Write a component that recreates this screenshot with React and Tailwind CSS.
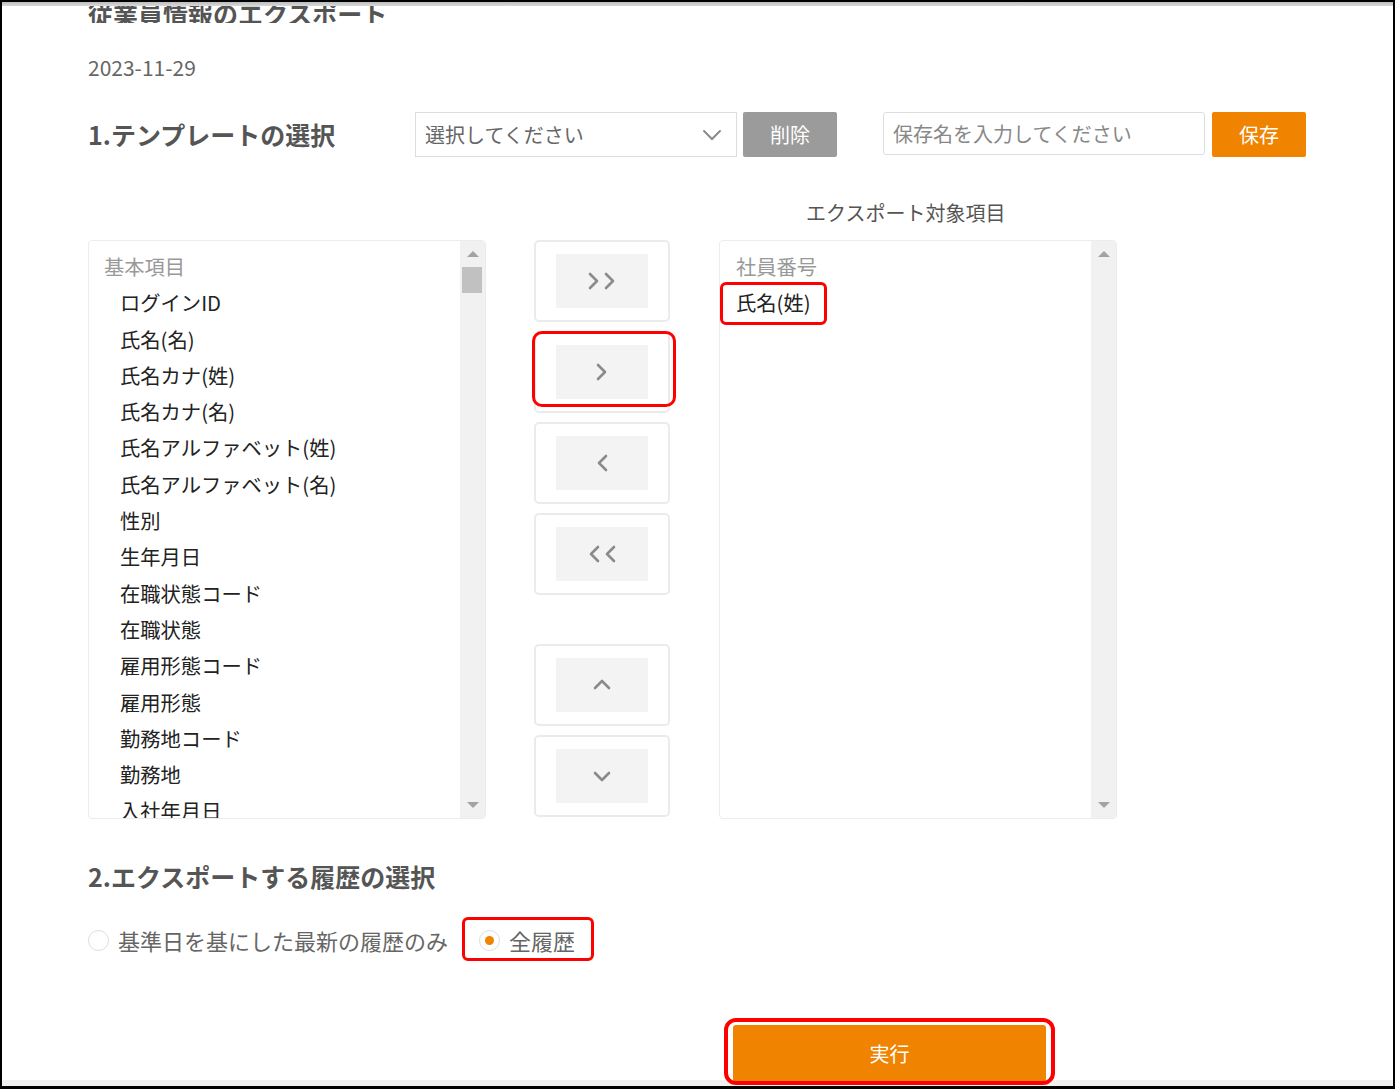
import { useState } from "react";

const font = { fontFamily: '"Noto Sans CJK JP", "Noto Sans", sans-serif' };

const baseItems = [
  "ログインID",
  "氏名(名)",
  "氏名カナ(姓)",
  "氏名カナ(名)",
  "氏名アルファベット(姓)",
  "氏名アルファベット(名)",
  "性別",
  "生年月日",
  "在職状態コード",
  "在職状態",
  "雇用形態コード",
  "雇用形態",
  "勤務地コード",
  "勤務地",
  "入社年月日",
];

const Chevron = ({ dir }) => {
  const paths = {
    right: "M7 4 L14 11 L7 18",
    left: "M15 4 L8 11 L15 18",
    up: "M4 14 L11 7 L18 14",
    down: "M4 8 L11 15 L18 8",
  };
  return (
    <svg width="22" height="22" viewBox="0 0 22 22" fill="none">
      <path d={paths[dir]} stroke="#8a8a8a" strokeWidth="2.6" strokeLinecap="round" strokeLinejoin="round" />
    </svg>
  );
};

const Double = ({ dir }) => (
  <div className="flex items-center -space-x-[6px]">
    <Chevron dir={dir} />
    <Chevron dir={dir} />
  </div>
);

const MoveButton = ({ children, highlight }) => (
  <div className="relative">
    <button
      type="button"
      className="w-[136px] h-[82px] bg-white border-2 border-[#ebebeb] rounded-[5px] flex items-center justify-center"
    >
      <div className="w-[92px] h-[54px] bg-[#f3f3f3] flex items-center justify-center">{children}</div>
    </button>
    {highlight && (
      <div className="absolute left-[-2px] top-0 w-[144px] h-[76px] border-[3px] border-[#ff0000] rounded-[10px] pointer-events-none" />
    )}
  </div>
);

const Scrollbar = ({ thumb }) => (
  <div className="w-[25px] h-full bg-[#f1f1f1] flex flex-col items-center justify-between py-[10px] relative">
    <div className="w-0 h-0 border-l-[6px] border-r-[6px] border-b-[6px] border-l-transparent border-r-transparent border-b-[#a3a3a3]" />
    {thumb && <div className="absolute left-[2px] top-[26px] w-[20px] h-[26px] bg-[#c1c1c1]" />}
    <div className="w-0 h-0 border-l-[6px] border-r-[6px] border-t-[6px] border-l-transparent border-r-transparent border-t-[#a3a3a3]" />
  </div>
);

export default function App() {
  const [history, setHistory] = useState("all");

  return (
    <div
      style={font}
      className="w-[1395px] h-[1089px] bg-white border-l-2 border-r-2 border-t-2 border-b-[3px] border-black flex flex-col overflow-hidden"
    >
      <div className="h-[4px] bg-gradient-to-b from-[#bdbdbd] to-[#d9d9d9] shrink-0" />

      <div className="flex-1 min-h-0 pl-[86px] text-[#333]">
        {/* Title (scrolled, cut at top) */}
        <div className="h-[17px] overflow-hidden flex items-end">
          <h1 className="text-[25px] leading-[25px] font-bold text-[#555] -mb-[3px] whitespace-nowrap">従業員情報のエクスポート</h1>
        </div>

        <div className="mt-[30px] text-[21px] leading-[28px] text-[#666]">2023-11-29</div>

        {/* 1. Template */}
        <div className="mt-[31px] flex items-start h-[45px]">
          <h2 className="w-[327px] text-[25px] leading-[44px] font-bold text-[#555]">1.テンプレートの選択</h2>
          <div className="w-[322px] h-[45px] border border-[#ddd] flex items-center justify-between pl-[9px] pr-[14px]">
            <span className="text-[20px] text-[#666]">選択してください</span>
            <svg width="20" height="12" viewBox="0 0 20 12" fill="none">
              <path d="M2 2 L10 10 L18 2" stroke="#8a8a8a" strokeWidth="2" strokeLinecap="round" />
            </svg>
          </div>
          <button type="button" className="ml-[6px] w-[94px] h-[45px] bg-[#9b9b9b] rounded-[2px] text-white text-[20px]">
            削除
          </button>
          <div className="ml-[46px] w-[322px] h-[43px] border border-[#ddd] rounded-[3px] flex items-center pl-[9px]">
            <span className="text-[20px] text-[#888]">保存名を入力してください</span>
          </div>
          <button type="button" className="ml-[7px] w-[94px] h-[45px] bg-[#f08300] rounded-[2px] text-white text-[20px]">
            保存
          </button>
        </div>

        <div className="mt-[42px] ml-[718px] text-[20px] leading-[28px] text-[#555]">エクスポート対象項目</div>

        {/* Lists */}
        <div className="mt-[13px] flex items-start">
          <div className="w-[398px] h-[579px] border border-[#ececec] rounded-[4px] flex overflow-hidden">
            <div className="flex-1 overflow-hidden pt-[7px] pl-[15px] text-[20.3px] leading-[36.3px]">
              <div className="text-[#999]">基本項目</div>
              {baseItems.map((item) => (
                <div key={item} className="pl-[16px] text-[#222] whitespace-nowrap">
                  {item}
                </div>
              ))}
            </div>
            <Scrollbar thumb />
          </div>

          <div className="ml-[48px] flex flex-col gap-[9px]">
            <MoveButton>
              <Double dir="right" />
            </MoveButton>
            <MoveButton highlight>
              <Chevron dir="right" />
            </MoveButton>
            <MoveButton>
              <Chevron dir="left" />
            </MoveButton>
            <MoveButton>
              <Double dir="left" />
            </MoveButton>
            <div className="h-[31px]" />
            <MoveButton>
              <Chevron dir="up" />
            </MoveButton>
            <MoveButton>
              <Chevron dir="down" />
            </MoveButton>
          </div>

          <div className="ml-[49px] w-[398px] h-[579px] border border-[#ececec] rounded-[4px] flex overflow-hidden">
            <div className="flex-1 pt-[7px] pl-[16px] text-[20.3px] leading-[36.3px]">
              <div className="text-[#999]">社員番号</div>
              <div className="relative w-fit text-[#222]">
                氏名(姓)
                <div className="absolute left-[-16px] top-[-2px] w-[107px] h-[43px] border-[3px] border-[#ff0000] rounded-[6px]" />
              </div>
            </div>
            <Scrollbar />
          </div>
        </div>

        {/* 2. History */}
        <h2 className="mt-[41px] text-[25px] leading-[32px] font-bold text-[#555]">2.エクスポートする履歴の選択</h2>

        <div className="mt-[32px] flex items-center h-[32px] text-[22px] text-[#666]">
          <label className="flex items-center cursor-pointer" onClick={() => setHistory("latest")}>
            <span className="w-[21px] h-[21px] rounded-full border border-[#ddd] flex items-center justify-center">
              {history === "latest" && <span className="w-[8px] h-[8px] rounded-full bg-[#f08300]" />}
            </span>
            <span className="ml-[9px]">基準日を基にした最新の履歴のみ</span>
          </label>
          <label className="relative ml-[31px] flex items-center cursor-pointer" onClick={() => setHistory("all")}>
            <span className="w-[21px] h-[21px] rounded-full border border-[#ddd] flex items-center justify-center">
              {history === "all" && <span className="w-[9px] h-[9px] rounded-full bg-[#f08300]" />}
            </span>
            <span className="ml-[9px]">全履歴</span>
            <div className="absolute left-[-17px] top-[-7px] w-[132px] h-[44px] border-[3px] border-[#ff0000] rounded-[6px] pointer-events-none" />
          </label>
        </div>

        <div className="mt-[69px] ml-[645px] relative w-[313px]">
          <button type="button" className="w-[313px] h-[57px] bg-[#f08300] rounded-[3px] text-white text-[20px]">
            実行
          </button>
          <div className="absolute z-10 left-[-9px] top-[-7px] w-[331px] h-[67px] border-[4px] border-[#ff0000] rounded-[12px] pointer-events-none" />
        </div>
      </div>

      <div className="h-[6px] bg-[#f0f0f0] shrink-0" />
    </div>
  );
}
